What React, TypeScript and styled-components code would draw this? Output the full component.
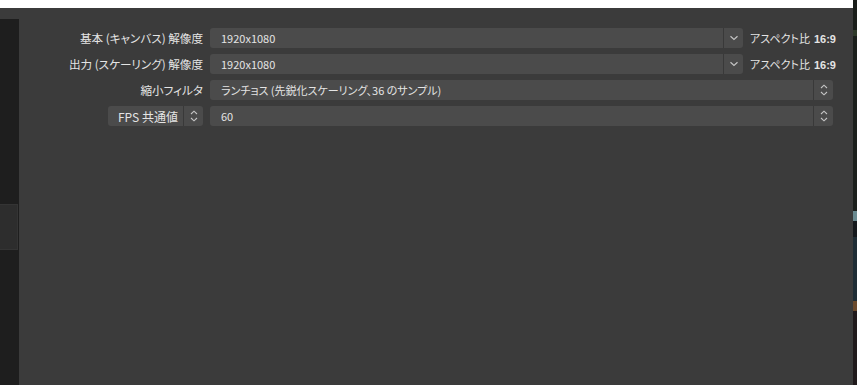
import React from "react";
import styled, { createGlobalStyle } from "styled-components";

const Global = createGlobalStyle`
  html, body { margin: 0; padding: 0; background: #3b3b3b; }
  body { font-family: "Noto Sans CJK JP", "Noto Sans", sans-serif; }
  * { box-sizing: border-box; }
`;

const Root = styled.div`
  display: flex;
  width: 857px;
  height: 385px;
  overflow: hidden;
`;

const Main = styled.div`
  flex: 1;
  display: flex;
  flex-direction: column;
`;

const WhiteBar = styled.div`
  height: 8px;
  background: #ffffff;
`;

const Panel = styled.div`
  flex: 1;
  display: flex;
  flex-direction: column;
  background: #3b3b3b;
  padding-top: 11px;
`;

const Body = styled.div`
  flex: 1;
  display: flex;
`;

const Sidebar = styled.div`
  width: 19px;
  background: #1e1e1e;
  padding-top: 185px;
`;

const SideBlock = styled.div`
  width: 18px;
  height: 46px;
  background: #2d2d2d;
  border: 1px solid #343434;
  border-left: none;
`;

const Content = styled.div`
  flex: 1;
  display: flex;
  flex-direction: column;
  gap: 6px;
  padding-top: 9px;
`;

const Row = styled.div`
  display: flex;
  align-items: center;
  height: 20px;
`;

const Label = styled.div`
  width: 185px;
  display: flex;
  justify-content: flex-end;
  align-items: center;
  padding-right: 1px;
  margin-right: 6px;
  font-size: 11.6px;
  color: #e4e4e4;
  font-feature-settings: "palt";
  white-space: nowrap;
`;

const Field = styled.div<{ $w: number }>`
  width: ${(p) => p.$w}px;
  height: 20px;
  display: flex;
  background: #4b4b4b;
  border-radius: 3px;
  overflow: hidden;
`;

const FieldText = styled.div`
  flex: 1;
  padding-left: 11px;
  display: flex;
  align-items: center;
  font-size: 11px;
  color: #e4e4e4;
  font-feature-settings: "palt";
  white-space: nowrap;
`;

const FieldButton = styled.div`
  width: 20px;
  display: flex;
  align-items: center;
  justify-content: center;
  border-left: 1px solid #393939;
  color: #bdbdbd;
`;

const Aspect = styled.div`
  margin-left: 7px;
  font-size: 11px;
  color: #e4e4e4;
  font-feature-settings: "palt";
  white-space: nowrap;
  b {
    font-family: "Liberation Sans", sans-serif;
    font-weight: 700;
    font-size: 11px;
    margin-left: 4px;
  }
`;

const FpsBox = styled.div`
  width: 95px;
  height: 20px;
  display: flex;
  background: #4b4b4b;
  border-radius: 3px;
  overflow: hidden;
`;

const FpsText = styled.div`
  flex: 1;
  display: flex;
  align-items: center;
  padding-left: 10px;
  font-size: 12px;
  color: #e4e4e4;
  white-space: nowrap;
`;

const RightEdge = styled.div`
  width: 4px;
  background: #1b1f1c;
  display: flex;
  flex-direction: column;
`;

const EdgeBit = styled.div<{ $h: number; $c: string }>`
  height: ${(p) => p.$h}px;
  background: ${(p) => p.$c};
`;

const Chevron = () => (
  <svg width="10" height="6" viewBox="0 0 10 6">
    <path d="M1.5 1.2 L5 4.5 L8.5 1.2" fill="none" stroke="#c4c4c4" strokeWidth="1.2" />
  </svg>
);

const Spin = () => (
  <svg width="10" height="14" viewBox="0 0 10 14">
    <path d="M2 5 L5 2.2 L8 5" fill="none" stroke="#c4c4c4" strokeWidth="1.1" />
    <path d="M2 9 L5 11.8 L8 9" fill="none" stroke="#c4c4c4" strokeWidth="1.1" />
  </svg>
);

export default function App() {
  return (
    <Root>
      <Global />
      <Main>
        <WhiteBar />
        <Panel>
          <Body>
            <Sidebar>
              <SideBlock />
            </Sidebar>
            <Content>
              <Row>
                <Label>基本 (キャンバス) 解像度</Label>
                <Field $w={533}>
                  <FieldText>1920x1080</FieldText>
                  <FieldButton>
                    <Chevron />
                  </FieldButton>
                </Field>
                <Aspect>
                  アスペクト比<b>16:9</b>
                </Aspect>
              </Row>
              <Row>
                <Label>出力 (スケーリング) 解像度</Label>
                <Field $w={533}>
                  <FieldText>1920x1080</FieldText>
                  <FieldButton>
                    <Chevron />
                  </FieldButton>
                </Field>
                <Aspect>
                  アスペクト比<b>16:9</b>
                </Aspect>
              </Row>
              <Row>
                <Label>縮小フィルタ</Label>
                <Field $w={623}>
                  <FieldText>ランチョス (先鋭化スケーリング、36 のサンプル)</FieldText>
                  <FieldButton>
                    <Spin />
                  </FieldButton>
                </Field>
              </Row>
              <Row>
                <Label>
                  <FpsBox>
                    <FpsText>FPS 共通値</FpsText>
                    <FieldButton>
                      <Spin />
                    </FieldButton>
                  </FpsBox>
                </Label>
                <Field $w={623}>
                  <FieldText>60</FieldText>
                  <FieldButton>
                    <Spin />
                  </FieldButton>
                </Field>
              </Row>
            </Content>
          </Body>
        </Panel>
      </Main>
      <RightEdge>
        <EdgeBit $h={30} $c="#1a1e1a" />
        <EdgeBit $h={6} $c="#2f3a2a" />
        <EdgeBit $h={175} $c="#1b1f1c" />
        <EdgeBit $h={10} $c="#6a8a90" />
        <EdgeBit $h={16} $c="#15191c" />
        <EdgeBit $h={64} $c="#1e2c34" />
        <EdgeBit $h={10} $c="#6a4a2c" />
        <EdgeBit $h={74} $c="#201a1c" />
      </RightEdge>
    </Root>
  );
}
